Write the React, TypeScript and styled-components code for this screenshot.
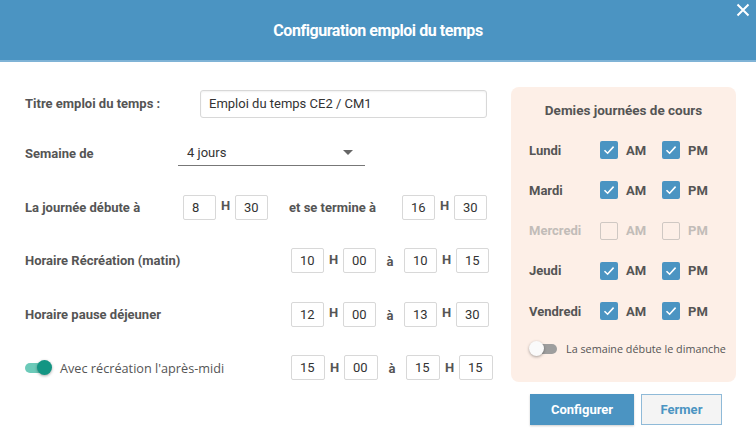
import React from 'react'
import styled, { createGlobalStyle } from 'styled-components'

const GlobalStyle = createGlobalStyle`
	html, body {
		margin: 0;
		padding: 0;
		background: #fff;
	}
	body {
		font-family: Roboto, 'Liberation Sans', sans-serif;
		color: #555;
	}
`

const BLUE = '#4b94c2'

type Time = [string, string]

const DAYS = [
	{ name: 'Lundi', am: true, pm: true },
	{ name: 'Mardi', am: true, pm: true },
	{ name: 'Mercredi', am: false, pm: false, disabled: true },
	{ name: 'Jeudi', am: true, pm: true },
	{ name: 'Vendredi', am: true, pm: true }
]

const TimeInput = ({ value, wide }: { value: Time; wide?: boolean }) => (
	<TimeGroup>
		<TimeBox $wide={wide} defaultValue={value[0]} />
		<HLetter $wide={wide}>H</HLetter>
		<TimeBox $wide={wide} defaultValue={value[1]} />
	</TimeGroup>
)

const Range = ({ from, to, wide }: { from: Time; to: Time; wide?: boolean }) => (
	<Controls $wide={wide}>
		<TimeInput value={from} wide={wide} />
		<Sep>à</Sep>
		<TimeInput value={to} wide={wide} />
	</Controls>
)

const Check = ({ checked, disabled, label }: { checked: boolean; disabled?: boolean; label: string }) => (
	<CheckItem $disabled={disabled}>
		<Box $checked={checked}>
			{checked && (
				<svg width='14' height='14' viewBox='0 0 14 14'>
					<path d='M2.5 7.2 L5.6 10.2 L11.6 3.6' fill='none' stroke='#fff' strokeWidth='1.6' />
				</svg>
			)}
		</Box>
		{label}
	</CheckItem>
)

export default function App() {
	return (
		<>
			<GlobalStyle />
			<Dialog>
				<Header>
					Configuration emploi du temps
					<Close>
						<svg width='14' height='14' viewBox='0 0 14 14'>
							<path d='M1.5 1.5 L12.5 12.5 M12.5 1.5 L1.5 12.5' stroke='#fff' strokeWidth='2' />
						</svg>
					</Close>
				</Header>
				<Body>
					<Form>
						<Row>
							<Label $width={175}>Titre emploi du temps :</Label>
							<TextInput defaultValue='Emploi du temps CE2 / CM1' />
						</Row>
						<Row>
							<Label $width={153}>Semaine de</Label>
							<Select>
								<span>4 jours</span>
								<Caret />
							</Select>
						</Row>
						<Row>
							<Label $width={158}>La journée débute à</Label>
							<TimeInput value={['8', '30']} />
							<Inline>et se termine à</Inline>
							<TimeInput value={['16', '30']} />
						</Row>
						<Row>
							<Label>Horaire Récréation (matin)</Label>
							<Range from={['10', '00']} to={['10', '15']} />
						</Row>
						<Row>
							<Label>Horaire pause déjeuner</Label>
							<Range from={['12', '00']} to={['13', '30']} />
						</Row>
						<Row>
							<Switch $on>
								<Knob $on />
							</Switch>
							<SwitchLabel>Avec récréation l'après-midi</SwitchLabel>
							<Range from={['15', '00']} to={['15', '15']} wide />
						</Row>
					</Form>
					<Side>
						<Panel>
							<PanelTitle>Demies journées de cours</PanelTitle>
							{DAYS.map(day => (
								<DayRow key={day.name} $disabled={day.disabled}>
									<DayName>{day.name}</DayName>
									<Check checked={day.am} disabled={day.disabled} label='AM' />
									<Check checked={day.pm} disabled={day.disabled} label='PM' />
								</DayRow>
							))}
							<SmallToggle>
								<Switch>
									<Knob />
								</Switch>
								La semaine débute le dimanche
							</SmallToggle>
						</Panel>
						<Buttons>
							<PrimaryButton>Configurer</PrimaryButton>
							<SecondaryButton>Fermer</SecondaryButton>
						</Buttons>
					</Side>
				</Body>
			</Dialog>
		</>
	)
}

const Dialog = styled.div`
	width: 756px;
	height: 439px;
	overflow: hidden;
	background: #fff;
`

const Header = styled.div`
	position: relative;
	height: 60px;
	display: flex;
	align-items: center;
	justify-content: center;
	background: ${BLUE};
	border-bottom: 2px solid #7fb3d6;
	color: #fff;
	font-size: 16px;
	font-weight: 700;
	letter-spacing: -0.45px;
`

const Close = styled.div`
	position: absolute;
	top: 3px;
	right: 6px;
	display: flex;
`

const Body = styled.div`
	display: flex;
	padding: 24px 20px 0 25px;
`

const Form = styled.div`
	flex: 1;
	display: flex;
	flex-direction: column;
	padding-top: 3px;
`

const Row = styled.div`
	height: 53.5px;
	display: flex;
	align-items: center;
	font-size: 13px;

	&:first-child {
		height: 29px;
		margin-bottom: 9px;
	}
`

const Label = styled.div<{ $width?: number }>`
	width: ${({ $width }) => ($width ? `${$width}px` : 'auto')};
	flex: ${({ $width }) => ($width ? 'none' : '1')};
	font-weight: 700;
	color: #555;
	font-size: 13px;
	white-space: nowrap;
`

const TextInput = styled.input`
	width: 287px;
	height: 28px;
	box-sizing: border-box;
	border: 1px solid #d8d8d8;
	border-radius: 3px;
	padding: 0 8px;
	font-family: Roboto, sans-serif;
	font-size: 13px;
	color: #333;
	box-shadow: inset 0 1px 2px rgba(0, 0, 0, 0.06);
	outline: none;
`

const Select = styled.div`
	width: 187px;
	height: 24px;
	box-sizing: border-box;
	display: flex;
	align-items: center;
	justify-content: space-between;
	padding: 0 9px 2px 9px;
	border-bottom: 1px solid #777;
	color: #333;
	font-size: 13px;
`

const Caret = styled.span`
	width: 0;
	height: 0;
	border-left: 5px solid transparent;
	border-right: 5px solid transparent;
	border-top: 5px solid #666;
	margin-right: 3px;
`

const Controls = styled.div<{ $wide?: boolean }>`
	display: flex;
	align-items: center;
	margin-right: ${({ $wide }) => ($wide ? '-2px' : '2px')};
`

const TimeGroup = styled.div`
	display: flex;
	align-items: center;
`

const TimeBox = styled.input<{ $wide?: boolean }>`
	width: ${({ $wide }) => ($wide ? '34px' : '33px')};
	height: 25px;
	box-sizing: border-box;
	border: 1px solid #d8d8d8;
	border-radius: 2px;
	padding: 0 0 0 8px;
	font-family: Roboto, sans-serif;
	font-size: 13px;
	color: #333;
	outline: none;
	background: #fff;
`

const HLetter = styled.span<{ $wide?: boolean }>`
	width: 19px;
	text-align: center;
	font-weight: 700;
	font-size: 13px;
	margin-bottom: ${({ $wide }) => ($wide ? '0' : '3px')};
`

const Sep = styled.span`
	width: 28px;
	text-align: center;
	font-weight: 700;
	font-size: 13px;
	margin-top: 2px;
`

const Inline = styled.span`
	font-weight: 700;
	width: 134px;
	padding-left: 21px;
	box-sizing: border-box;
`

const Switch = styled.div<{ $on?: boolean }>`
	position: relative;
	width: 25px;
	height: 10px;
	border-radius: 5px;
	background: ${({ $on }) => ($on ? '#6ccab9' : '#9e9e9e')};
	margin-left: ${({ $on }) => ($on ? '0' : '3px')};
	flex: none;
`

const Knob = styled.span<{ $on?: boolean }>`
	position: absolute;
	top: -3px;
	left: ${({ $on }) => ($on ? '12px' : '-3px')};
	width: 15px;
	height: 15px;
	border-radius: 50%;
	background: ${({ $on }) => ($on ? '#139583' : '#fafafa')};
	box-shadow: 0 1px 3px rgba(0, 0, 0, 0.35);
`

const SwitchLabel = styled.span`
	flex: 1;
	margin-left: 10px;
	font-family: 'Open Sans', sans-serif;
	font-size: 12.7px;
	color: #555;
`

const Side = styled.div`
	width: 225px;
	display: flex;
	flex-direction: column;
	padding-top: 1px;
	margin-left: 20px;
`

const Panel = styled.div`
	height: 295px;
	box-sizing: border-box;
	background: #fdefe7;
	border-radius: 8px;
	padding: 15px 0 0 18px;
	display: flex;
	flex-direction: column;
`

const PanelTitle = styled.div`
	font-weight: 700;
	font-size: 13.5px;
	color: #555;
	text-align: center;
	margin: 0 18px 23px 0;
`

const DayRow = styled.div<{ $disabled?: boolean }>`
	display: flex;
	align-items: center;
	height: 18px;
	margin-bottom: 22.3px;
	color: ${({ $disabled }) => ($disabled ? '#c2bcb8' : '#555')};
`

const DayName = styled.span`
	width: 71px;
	font-weight: 700;
	font-size: 13px;
`

const CheckItem = styled.span<{ $disabled?: boolean }>`
	display: flex;
	align-items: center;
	width: 62px;
	gap: 8px;
	font-weight: 700;
	font-size: 13px;
	color: ${({ $disabled }) => ($disabled ? '#c2bcb8' : '#555')};
`

const Box = styled.span<{ $checked: boolean }>`
	width: 18px;
	height: 18px;
	box-sizing: border-box;
	border-radius: 2px;
	display: flex;
	align-items: center;
	justify-content: center;
	background: ${({ $checked }) => ($checked ? BLUE : 'transparent')};
	border: ${({ $checked }) => ($checked ? 'none' : '1.5px solid #cfc8c3')};
`

const SmallToggle = styled.div`
	display: flex;
	align-items: center;
	gap: 9px;
	margin-top: -1px;
	font-family: 'Open Sans', sans-serif;
	font-size: 10.8px;
	color: #555;
`

const Buttons = styled.div`
	display: flex;
	gap: 7px;
	padding-left: 19px;
	margin-top: 12px;
`

const PrimaryButton = styled.button`
	width: 104px;
	height: 31px;
	border: none;
	background: ${BLUE};
	color: #fff;
	font-family: Roboto, sans-serif;
	font-weight: 700;
	font-size: 13px;
	box-shadow: 0 1px 2px rgba(0, 0, 0, 0.2);
`

const SecondaryButton = styled.button`
	width: 81px;
	height: 31px;
	box-sizing: border-box;
	border: 1px solid #8fbad8;
	background: #f4f4f4;
	color: ${BLUE};
	font-family: Roboto, sans-serif;
	font-weight: 700;
	font-size: 13px;
`
